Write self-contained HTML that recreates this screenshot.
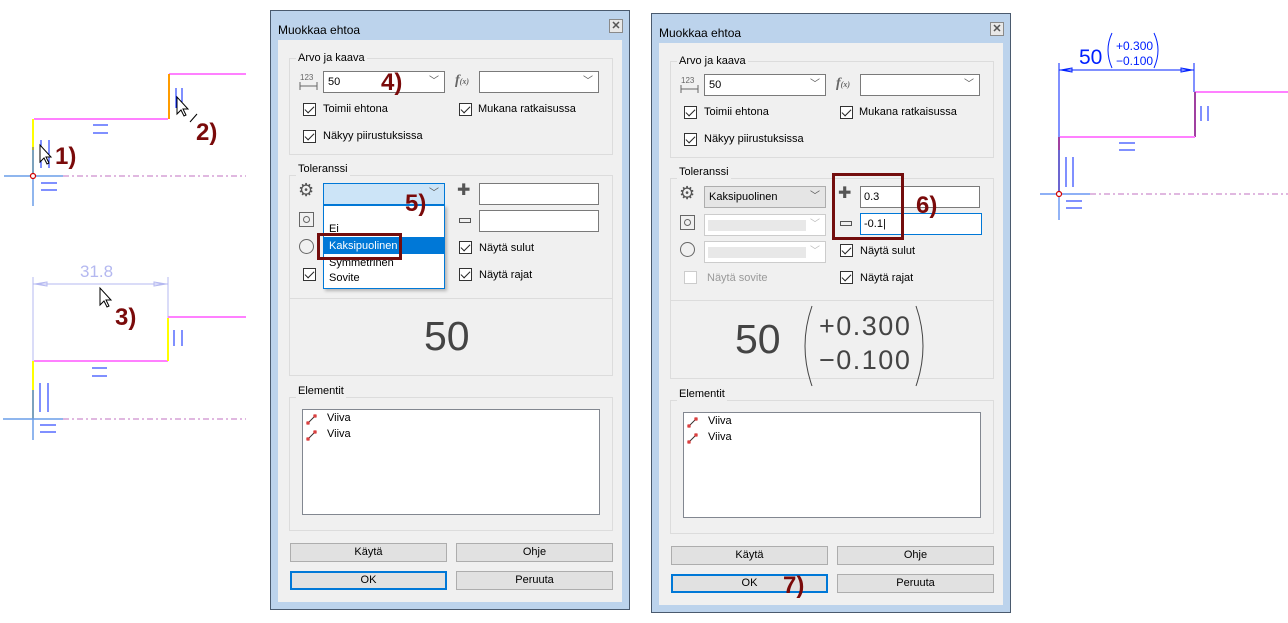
<!DOCTYPE html>
<html><head><meta charset="utf-8"><style>
*{box-sizing:border-box;margin:0;padding:0}
body{width:1288px;height:623px;background:#fff;position:relative;overflow:hidden;font-family:"Liberation Sans",sans-serif;font-size:11px;color:#000}
.a{position:absolute}
.dlg{position:absolute;width:360px;height:600px;background:#bcd3ec;border:1px solid #4a5a6e}
.client{position:absolute;left:7px;top:29px;width:344px;height:562px;background:#f0f0f0}
.title{position:absolute;left:7px;top:12px;font-size:12px;color:#000}
.close{position:absolute;left:338px;top:8px;width:14px;height:14px;border:1px solid #8a8a8a;background:#e8e8e8;font-size:11px;line-height:12px;text-align:center;color:#555;font-weight:bold}
.grp{position:absolute;border:1px solid #dcdcdc}
.lbl{position:absolute;background:#f0f0f0;padding:0 2px;line-height:14px;white-space:nowrap}
.cmb{position:absolute;background:#fff;border:1px solid #7a7a7a;height:22px;line-height:20px;padding-left:4px;white-space:nowrap}
.cmb .ar{position:absolute;right:5px;top:0;color:#555;font-size:10px}
.inp{position:absolute;background:#fff;border:1px solid #7a7a7a;height:22px;line-height:20px;padding-left:3px}
.cb{position:absolute;width:13px;height:13px;border:1px solid #333;background:#fff}
.t{position:absolute;line-height:14px;white-space:nowrap}
.btn{position:absolute;width:157px;height:19px;background:#e1e1e1;border:1px solid #adadad;text-align:center;line-height:17px}
.mark{position:absolute;color:#7a0a0a;font-weight:bold;font-size:24px;line-height:24px}
.rbox{position:absolute;border:3px solid #730d0d}
</style></head><body>

<!-- left drawings -->
<svg class="a" style="left:0;top:0" width="260" height="460">
<g fill="none">
<line x1="34" y1="119" x2="168" y2="119" stroke="#ff80ff" stroke-width="2"/>
<line x1="169" y1="74" x2="246" y2="74" stroke="#ff80ff" stroke-width="2"/>
<line x1="169" y1="74" x2="169" y2="119" stroke="#ff9c00" stroke-width="2"/>
<line x1="33" y1="119" x2="33" y2="147" stroke="#ffff00" stroke-width="2"/>
<line x1="33" y1="147" x2="33" y2="176" stroke="#b0b040" stroke-width="2"/>
<line x1="4" y1="176" x2="63" y2="176" stroke="#6a9ee8" stroke-width="1.5"/>
<line x1="33" y1="150" x2="33" y2="206" stroke="#6a9ee8" stroke-width="1.5"/>
<line x1="63" y1="176" x2="246" y2="176" stroke="#c070c0" stroke-width="1" stroke-dasharray="6,3,2,3"/>
<circle cx="33" cy="176" r="2.5" stroke="#d00000" stroke-width="1.2" fill="#fff"/>
<g stroke="#0020ff" stroke-width="1">
<line x1="41" y1="140" x2="41" y2="168"/><line x1="49" y1="140" x2="49" y2="168"/>
<line x1="93" y1="125" x2="108" y2="125"/><line x1="93" y1="133" x2="108" y2="133"/>
<line x1="41" y1="183" x2="57" y2="183"/><line x1="41" y1="190" x2="57" y2="190"/>
<line x1="176" y1="88" x2="176" y2="108"/><line x1="182" y1="88" x2="182" y2="108"/>
</g>
<line x1="190" y1="122" x2="197" y2="114" stroke="#000"/>
<g stroke="#b4b8f0" stroke-width="1">
<line x1="33" y1="277" x2="33" y2="361"/><line x1="168" y1="277" x2="168" y2="318"/>
<line x1="33" y1="284" x2="168" y2="284"/>
<path d="M35 284l12-2v4z M166 284l-12-2v4z"/>
</g>
<line x1="34" y1="361" x2="168" y2="361" stroke="#ff80ff" stroke-width="2"/>
<line x1="168" y1="317" x2="246" y2="317" stroke="#ff80ff" stroke-width="2"/>
<line x1="168" y1="318" x2="168" y2="361" stroke="#ffff00" stroke-width="2"/>
<line x1="33" y1="361" x2="33" y2="390" stroke="#ffff00" stroke-width="2"/>
<line x1="33" y1="390" x2="33" y2="419" stroke="#b0b040" stroke-width="2"/>
<line x1="3" y1="419" x2="63" y2="419" stroke="#6a9ee8" stroke-width="1.5"/>
<line x1="33" y1="390" x2="33" y2="440" stroke="#6a9ee8" stroke-width="1.5"/>
<line x1="63" y1="419" x2="246" y2="419" stroke="#c070c0" stroke-width="1" stroke-dasharray="6,3,2,3"/>
<g stroke="#0020ff" stroke-width="1">
<line x1="174" y1="330" x2="174" y2="346"/><line x1="182" y1="330" x2="182" y2="346"/>
<line x1="92" y1="368" x2="107" y2="368"/><line x1="92" y1="376" x2="107" y2="376"/>
<line x1="40" y1="383" x2="40" y2="412"/><line x1="48" y1="383" x2="48" y2="412"/>
<line x1="40" y1="425" x2="56" y2="425"/><line x1="40" y1="432" x2="56" y2="432"/>
</g>
</g>
<g fill="#fff" stroke="#000" stroke-width="1">
<path d="M40 145v17l4-4 3 6 2-1-3-6h5z"/>
<path d="M177 97v17l4-4 3 6 2-1-3-6h5z"/>
<path d="M100 288v17l4-4 3 6 2-1-3-6h5z"/>
</g>
<text x="80" y="277" font-family="Liberation Sans" font-size="17" fill="#b4b8f0">31.8</text>
</svg>
<div class="mark" style="left:55px;top:145px">1)</div>
<div class="mark" style="left:196px;top:121px">2)</div>
<div class="mark" style="left:115px;top:306px">3)</div>

<!-- right drawing -->
<svg class="a" style="left:1030px;top:30px" width="258" height="200">
<g fill="none">
<line x1="29" y1="33" x2="29" y2="163" stroke="#0020ff"/>
<line x1="164" y1="33" x2="164" y2="62" stroke="#0020ff"/>
<line x1="29" y1="40" x2="164" y2="40" stroke="#0020ff"/>
<path d="M31 40l11-2v4z M162 40l-11-2v4z" stroke="#0020ff"/>
<line x1="165" y1="62" x2="258" y2="62" stroke="#ff80ff" stroke-width="2"/>
<line x1="165" y1="62" x2="165" y2="107" stroke="#a040a0" stroke-width="2"/>
<line x1="30" y1="107" x2="165" y2="107" stroke="#ff80ff" stroke-width="2"/>
<line x1="29" y1="107" x2="29" y2="164" stroke="#a040a0" stroke-width="2"/>
<line x1="10" y1="164" x2="60" y2="164" stroke="#4a80f0" stroke-width="1.2"/>
<line x1="29" y1="120" x2="29" y2="190" stroke="#4a80f0" stroke-width="1.2"/>
<line x1="60" y1="164" x2="258" y2="164" stroke="#c070c0" stroke-dasharray="6,3,2,3"/>
<circle cx="29" cy="164" r="2.5" stroke="#d00000" stroke-width="1.2" fill="#fff"/>
<g stroke="#0020ff">
<line x1="171" y1="76" x2="171" y2="91"/><line x1="178" y1="76" x2="178" y2="91"/>
<line x1="89" y1="113" x2="105" y2="113"/><line x1="89" y1="120" x2="105" y2="120"/>
<line x1="36" y1="127" x2="36" y2="157"/><line x1="43" y1="127" x2="43" y2="157"/>
<line x1="36" y1="171" x2="52" y2="171"/><line x1="36" y1="178" x2="52" y2="178"/>
<path d="M82 3q-8 17 0 35 M124 3q8 17 0 35"/>
</g>
</g>
<g font-family="Liberation Sans" fill="#0020ff">
<text x="49" y="34" font-size="21">50</text>
<text x="86" y="20" font-size="12">+0.300</text>
<text x="86" y="35" font-size="12">−0.100</text>
</g>
</svg>

<!-- DIALOG 1 -->
<div class="dlg" style="left:270px;top:10px">
<div class="title">Muokkaa ehtoa</div>
<div class="close">✕</div>
<div class="client"></div>
<div class="grp" style="left:18px;top:47px;width:324px;height:97px"></div>
<div class="lbl" style="left:25px;top:40px">Arvo ja kaava</div>
<div class="t" style="left:29px;top:60px;font-size:8px;color:#666">123</div>
<svg class="a" style="left:28px;top:70px" width="19" height="10"><path d="M1 1v8M18 1v8M1 5h17" stroke="#666" fill="none"/></svg>
<div class="cmb" style="left:52px;top:60px;width:122px">50<span class="ar">﹀</span></div>
<div class="t" style="left:184px;top:63px;color:#666;font-style:italic;font-family:'Liberation Serif',serif;font-size:14px;font-weight:bold">f<span style="font-size:8px">(x)</span></div>
<div class="cmb" style="left:208px;top:60px;width:120px"><span class="ar">﹀</span></div>
<div class="cb" style="left:32px;top:92px"></div><div class="t" style="left:52px;top:91px">Toimii ehtona</div>
<div class="cb" style="left:188px;top:92px"></div><div class="t" style="left:207px;top:91px">Mukana ratkaisussa</div>
<div class="cb" style="left:32px;top:119px"></div><div class="t" style="left:52px;top:118px">Näkyy piirustuksissa</div>

<div class="grp" style="left:18px;top:164px;width:324px;height:201px"></div>
<div class="a" style="left:19px;top:287px;width:322px;height:1px;background:#dcdcdc"></div>
<div class="lbl" style="left:25px;top:151px">Toleranssi</div>
<div class="t" style="left:27px;top:172px;font-size:18px;color:#555">⚙</div>
<div class="cmb" style="left:52px;top:172px;width:122px;background:#cce4f7;border-color:#0078d7"><span class="ar">﹀</span></div>
<div class="t" style="left:186px;top:173px;font-size:16px;color:#555">✚</div>
<div class="inp" style="left:208px;top:172px;width:120px"></div>
<div class="a" style="left:188px;top:207px;width:12px;height:5px;border:1px solid #555"></div>
<div class="inp" style="left:208px;top:199px;width:120px"></div>
<div class="a" style="left:28px;top:201px;width:15px;height:15px;border:1px solid #666"><div class="a" style="left:3px;top:3px;width:7px;height:7px;border:1px solid #666;border-radius:50%"></div></div>
<div class="a" style="left:28px;top:228px;width:15px;height:15px;border:1px solid #666;border-radius:50%"></div>
<div class="cb" style="left:188px;top:230px"></div><div class="t" style="left:208px;top:230px">Näytä sulut</div>
<div class="cb" style="left:188px;top:257px"></div><div class="t" style="left:208px;top:257px">Näytä rajat</div>
<div class="cb" style="left:32px;top:257px"></div>
<div class="t" style="left:153px;top:303px;font-size:41px;line-height:44px;color:#444">50</div>

<div class="grp" style="left:18px;top:386px;width:324px;height:134px"></div>
<div class="lbl" style="left:25px;top:373px">Elementit</div>
<div class="a" style="left:31px;top:398px;width:298px;height:106px;background:#fff;border:1px solid #828790"></div>
<div class="t" style="left:56px;top:400px">Viiva</div>
<div class="t" style="left:56px;top:416px">Viiva</div>
<svg class="a" style="left:35px;top:402px" width="12" height="30"><g stroke="#c00" fill="#fff" stroke-width="1"><path d="M2 10L9 3" stroke="#333"/><rect x="1" y="9" width="2" height="2"/><rect x="8" y="2" width="2" height="2"/><path d="M2 26L9 19" stroke="#333"/><rect x="1" y="25" width="2" height="2"/><rect x="8" y="18" width="2" height="2"/></g></svg>

<div class="btn" style="left:19px;top:532px">Käytä</div>
<div class="btn" style="left:185px;top:532px">Ohje</div>
<div class="btn" style="left:19px;top:560px;border:2px solid #0078d7;line-height:15px">OK</div>
<div class="btn" style="left:185px;top:560px">Peruuta</div>

<div class="a" style="left:52px;top:194px;width:122px;height:84px;background:#fff;border:1px solid #0078d7;box-shadow:2px 2px 3px rgba(0,0,0,.25)"></div>
<div class="t" style="left:58px;top:211px">Ei</div>
<div class="a" style="left:53px;top:226px;width:120px;height:17px;background:#0078d7"></div>
<div class="t" style="left:58px;top:228px;color:#fff">Kaksipuolinen</div>
<div class="t" style="left:58px;top:245px">Symmetrinen</div>
<div class="t" style="left:58px;top:260px">Sovite</div>
<div class="rbox" style="left:46px;top:222px;width:85px;height:27px"></div>
<div class="mark" style="left:110px;top:60px">4)</div>
<div class="mark" style="left:134px;top:181px">5)</div>
</div>

<!-- DIALOG 2 -->
<div class="dlg" style="left:651px;top:13px">
<div class="title">Muokkaa ehtoa</div>
<div class="close">✕</div>
<div class="client"></div>
<div class="grp" style="left:18px;top:47px;width:324px;height:97px"></div>
<div class="lbl" style="left:25px;top:40px">Arvo ja kaava</div>
<div class="t" style="left:29px;top:60px;font-size:8px;color:#666">123</div>
<svg class="a" style="left:28px;top:70px" width="19" height="10"><path d="M1 1v8M18 1v8M1 5h17" stroke="#666" fill="none"/></svg>
<div class="cmb" style="left:52px;top:60px;width:122px">50<span class="ar">﹀</span></div>
<div class="t" style="left:184px;top:63px;color:#666;font-style:italic;font-family:'Liberation Serif',serif;font-size:14px;font-weight:bold">f<span style="font-size:8px">(x)</span></div>
<div class="cmb" style="left:208px;top:60px;width:120px"><span class="ar">﹀</span></div>
<div class="cb" style="left:32px;top:92px"></div><div class="t" style="left:52px;top:91px">Toimii ehtona</div>
<div class="cb" style="left:188px;top:92px"></div><div class="t" style="left:207px;top:91px">Mukana ratkaisussa</div>
<div class="cb" style="left:32px;top:119px"></div><div class="t" style="left:52px;top:118px">Näkyy piirustuksissa</div>

<div class="grp" style="left:18px;top:164px;width:324px;height:201px"></div>
<div class="a" style="left:19px;top:286px;width:322px;height:1px;background:#dcdcdc"></div>
<div class="lbl" style="left:25px;top:151px">Toleranssi</div>
<div class="t" style="left:27px;top:172px;font-size:18px;color:#555">⚙</div>
<div class="cmb" style="left:52px;top:172px;width:122px;background:#e5e5e5;border-color:#adadad">Kaksipuolinen<span class="ar">﹀</span></div>
<div class="t" style="left:186px;top:173px;font-size:16px;color:#555">✚</div>
<div class="inp" style="left:208px;top:172px;width:120px">0.3</div>
<div class="a" style="left:188px;top:207px;width:12px;height:5px;border:1px solid #555"></div>
<div class="inp" style="left:208px;top:199px;width:122px;border-color:#0078d7">-0.1|</div>
<div class="a" style="left:28px;top:201px;width:15px;height:15px;border:1px solid #666"><div class="a" style="left:3px;top:3px;width:7px;height:7px;border:1px solid #666;border-radius:50%"></div></div>
<div class="cmb" style="left:52px;top:200px;width:122px;border-color:#ccc"><div class="a" style="left:3px;top:5px;width:98px;height:11px;background:#e8e8e8"></div><span class="ar" style="color:#bbb">﹀</span></div>
<div class="a" style="left:28px;top:228px;width:15px;height:15px;border:1px solid #666;border-radius:50%"></div>
<div class="cmb" style="left:52px;top:227px;width:122px;border-color:#ccc"><div class="a" style="left:3px;top:5px;width:98px;height:11px;background:#e8e8e8"></div><span class="ar" style="color:#bbb">﹀</span></div>
<div class="cb" style="left:188px;top:230px"></div><div class="t" style="left:208px;top:230px">Näytä sulut</div>
<div class="cb" style="left:188px;top:257px"></div><div class="t" style="left:208px;top:257px">Näytä rajat</div>
<div class="cb" style="left:32px;top:257px;border-color:#ccc"></div><div class="t" style="left:55px;top:257px;color:#999">Näytä sovite</div>
<div class="t" style="left:83px;top:303px;font-size:41px;line-height:44px;color:#444">50</div>
<svg class="a" style="left:148px;top:290px" width="130" height="84"><path d="M12 2q-14 40 0 80 M116 2q14 40 0 80" stroke="#444" fill="none"/><text x="19" y="31" font-family="Liberation Sans" font-size="27" letter-spacing="1.5" fill="#444">+0.300</text><text x="19" y="65" font-family="Liberation Sans" font-size="27" letter-spacing="1.5" fill="#444">−0.100</text></svg>

<div class="grp" style="left:18px;top:386px;width:324px;height:134px"></div>
<div class="lbl" style="left:25px;top:373px">Elementit</div>
<div class="a" style="left:31px;top:398px;width:298px;height:106px;background:#fff;border:1px solid #828790"></div>
<div class="t" style="left:56px;top:400px">Viiva</div>
<div class="t" style="left:56px;top:416px">Viiva</div>
<svg class="a" style="left:35px;top:402px" width="12" height="30"><g stroke="#c00" fill="#fff" stroke-width="1"><path d="M2 10L9 3" stroke="#333"/><rect x="1" y="9" width="2" height="2"/><rect x="8" y="2" width="2" height="2"/><path d="M2 26L9 19" stroke="#333"/><rect x="1" y="25" width="2" height="2"/><rect x="8" y="18" width="2" height="2"/></g></svg>

<div class="btn" style="left:19px;top:532px">Käytä</div>
<div class="btn" style="left:185px;top:532px">Ohje</div>
<div class="btn" style="left:19px;top:560px;border:2px solid #0078d7;line-height:15px">OK</div>
<div class="btn" style="left:185px;top:560px">Peruuta</div>
<div class="rbox" style="left:180px;top:159px;width:72px;height:67px"></div>
<div class="mark" style="left:264px;top:180px">6)</div>
<div class="mark" style="left:131px;top:560px">7)</div>
</div>

<style>.cb::after{content:"";position:absolute;left:3px;top:0px;width:4px;height:8px;border:solid #222;border-width:0 1.3px 1.3px 0;transform:rotate(45deg)}</style>
<style>.cb[style*="#ccc"]::after{display:none}</style>
</body></html>
